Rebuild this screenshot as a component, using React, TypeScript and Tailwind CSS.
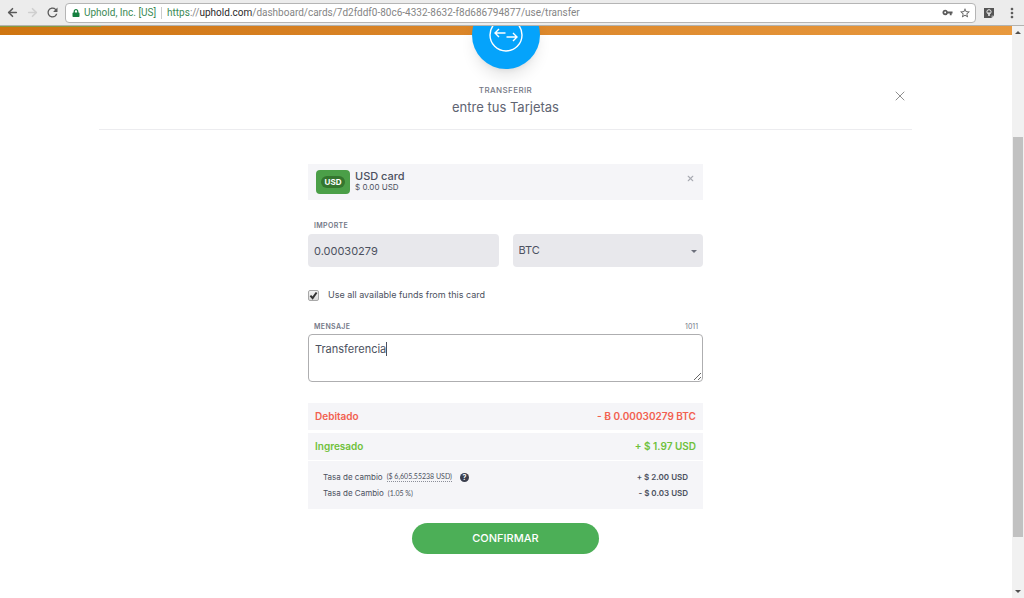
import React, { useState } from 'react';
import { ArrowLeft, ArrowRight, X } from 'lucide-react';
import { FaLock } from 'react-icons/fa';
import { MdMoreVert, MdRefresh, MdStarBorder, MdVpnKey } from 'react-icons/md';

const BrowserBar: React.FC = () => (
  <header className="relative z-10 flex h-[26px] shrink-0 items-center border-b border-[#b3b3b0] bg-[#ececec] pl-1 pr-1 text-[#5a5a5a]">
    <button type="button" aria-label="Back" className="flex w-4 justify-center">
      <ArrowLeft className="h-[13px] w-[13px]" strokeWidth={3} />
    </button>
    <button type="button" aria-label="Forward" disabled className="ml-1 flex w-4 justify-center text-[#cfcfcf]">
      <ArrowRight className="h-[13px] w-[13px]" strokeWidth={3} />
    </button>
    <button type="button" aria-label="Reload" className="ml-1 flex w-4 justify-center">
      <MdRefresh className="h-[15px] w-[15px]" />
    </button>
    <div className="ml-[5px] flex h-5 min-w-0 flex-1 items-center rounded-sm border border-[#b5b5b5] bg-white pl-1 pr-1 font-[Roboto,sans-serif] text-[10px]">
      <FaLock className="ml-0.5 h-2 w-2 shrink-0 text-[#15803f]" />
      <span className="ml-1 whitespace-nowrap text-[#3a8a55]">Uphold, Inc. [US]</span>
      <span className="mx-[5px] h-3 w-px shrink-0 bg-[#cccccc]" />
      <span className="min-w-0 flex-1 truncate text-[#858585]">
        <span className="text-[#3a8a55]">https</span>://<span className="text-[#2a2a2a]">uphold.com</span>
        /dashboard/cards/7d2fddf0-80c6-4332-8632-f8d686794877/use/transfer
      </span>
      <button type="button" aria-label="Saved password">
        <MdVpnKey className="h-[11px] w-[11px]" />
      </button>
      <button type="button" aria-label="Bookmark" className="ml-1.5">
        <MdStarBorder className="h-3 w-3" />
      </button>
    </div>
    <button type="button" aria-label="Extension" className="ml-[7px]">
      <svg viewBox="0 0 12 12" className="h-3 w-3">
        <path d="M1 1h10v7.5L8.5 11H1z" fill="#555" />
        <path d="M11 8.5H8.5V11" fill="#aaa" />
        <circle cx="6" cy="4.8" r="2.1" fill="none" stroke="#eee" />
        <path d="M6 5v4M5 8h2" stroke="#eee" />
      </svg>
    </button>
    <button type="button" aria-label="Menu" className="ml-[9px]">
      <MdMoreVert className="h-4 w-4" />
    </button>
  </header>
);

const Scrollbar: React.FC = () => (
  <div aria-hidden="true" className="flex w-3 shrink-0 flex-col items-center bg-[#f1f1f1]">
    <svg viewBox="0 0 12 12" className="h-3 w-3 shrink-0">
      <path d="M3 8l3-3 3 3z" fill="#505050" />
    </svg>
    <div className="flex w-full flex-1 flex-col px-px">
      <div className="basis-[18%]" />
      <div className="basis-[73%] bg-[#c1c1c1]" />
    </div>
    <svg viewBox="0 0 12 12" className="h-3 w-3 shrink-0">
      <path d="M3 4l3 3 3-3z" fill="#505050" />
    </svg>
  </div>
);

const TransferForm: React.FC = () => {
  const [amount, setAmount] = useState('0.00030279');
  const [currency, setCurrency] = useState('BTC');
  const [useAll, setUseAll] = useState(true);
  const [message, setMessage] = useState('Transferencia');

  return (
    <form className="mx-auto mt-[34px] w-full max-w-[395px] text-[#4c5160]" onSubmit={(e) => e.preventDefault()}>
      {/* Selected card */}
      <div className="flex h-9 items-center bg-[#f5f5f8] pl-2 pr-2">
        <div className="flex h-6 w-[34px] items-center justify-center rounded-sm bg-[#4b9f48]">
          <span className="rounded-full bg-[#34762f] px-1 text-[8px] leading-3 font-bold text-white">USD</span>
        </div>
        <div className="ml-[5px] flex-1 pb-0.5">
          <p className="text-[11px] leading-3 font-medium">USD card</p>
          <p className="text-[8px] leading-[11px]">$ 0.00 USD</p>
        </div>
        <button type="button" aria-label="Remove card" className="mb-2 text-[#a9abb3]">
          <X className="h-[9px] w-[9px]" strokeWidth={3} />
        </button>
      </div>

      {/* Amount */}
      <label htmlFor="amount" className="mt-5 block pl-1.5 text-[7px] leading-3 font-semibold tracking-wider text-[#747887]">
        IMPORTE
      </label>
      <div className="mt-0.5 grid grid-cols-2 gap-3.5">
        <input
          id="amount"
          value={amount}
          onChange={(e) => setAmount(e.target.value)}
          className="h-[33px] w-full rounded-sm bg-[#e8e8ec] px-1.5 text-[11px] outline-none"
        />
        <div className="relative">
          <select
            aria-label="Moneda"
            value={currency}
            onChange={(e) => setCurrency(e.target.value)}
            className="h-[33px] w-full appearance-none rounded-sm bg-[#e8e8ec] px-1.5 text-[11px] outline-none"
          >
            <option>BTC</option>
            <option>USD</option>
          </select>
          <svg viewBox="0 0 6 3" className="pointer-events-none absolute top-4 right-1.5 h-[3px] w-1.5">
            <path d="M0 0h6L3 3z" fill="#6d707c" />
          </svg>
        </div>
      </div>

      <div className="mt-5 flex h-4 items-center">
        <div className="relative h-[11px] w-[11px]">
          <input
            id="use-all"
            type="checkbox"
            checked={useAll}
            onChange={(e) => setUseAll(e.target.checked)}
            className="block h-[11px] w-[11px] appearance-none rounded-xs border border-[#a8a8a8] bg-linear-to-b from-[#f2f2f2] to-[#dcdcdc]"
          />
          {useAll && (
            <svg viewBox="0 0 11 11" className="pointer-events-none absolute inset-0 h-[11px] w-[11px]">
              <path d="M2.4 5.6l2.2 2.5 4-5.6" fill="none" stroke="#333" strokeWidth="2" />
            </svg>
          )}
        </div>
        <label htmlFor="use-all" className="ml-[9px] text-[9px]">
          Use all available funds from this card
        </label>
      </div>

      {/* Message */}
      <div className="mt-[18px] flex justify-between pl-1.5 pr-[5px] text-[7px] leading-3 text-[#747887]">
        <label htmlFor="message" className="font-semibold tracking-wider">
          MENSAJE
        </label>
        <span>1011</span>
      </div>
      <div className="relative mt-px">
        <textarea
          id="message"
          value={message}
          onChange={(e) => setMessage(e.target.value)}
          className="block h-12 w-full rounded-sm border border-[#aeaeb0] bg-white px-1.5 py-1.5 text-[11px] leading-4 outline-none"
        />
        <span className="absolute top-2 left-[78px] h-3.5 w-px bg-[#4c5160]" />
      </div>

      {/* Totals */}
      <div className="mt-[21px] flex h-[27px] items-center justify-between bg-[#f5f5f8] px-[7px] text-[10px] font-semibold text-[#f2604f]">
        <span>Debitado</span>
        <span>- Ƀ 0.00030279 BTC</span>
      </div>
      <div className="mt-[3px] flex h-7 items-center justify-between border-b border-white bg-[#f5f5f8] px-[7px] text-[10px] font-semibold text-[#6fc13b]">
        <span>Ingresado</span>
        <span>+ $ 1.97 USD</span>
      </div>
      <div className="bg-[#f5f5f8] px-[15px] py-2 text-[8px] leading-4">
        <div className="flex justify-between">
          <span className="flex items-center gap-1">
            Tasa de cambio
            <span className="border-b border-dotted border-[#8b8e99] font-[Lato,sans-serif] text-[7px] leading-[9px]">
              ($ 6,605.55238 USD)
            </span>
            <button
              type="button"
              aria-label="Ayuda"
              className="ml-1 flex h-[9px] w-[9px] items-center justify-center rounded-full bg-[#3b3f4e] text-[7px] leading-[9px] font-bold text-white"
            >
              ?
            </button>
          </span>
          <span className="font-semibold">+ $ 2.00 USD</span>
        </div>
        <div className="flex justify-between">
          <span className="flex items-center gap-1">
            Tasa de Cambio <span className="font-[Lato,sans-serif] text-[7px]">(1.05 %)</span>
          </span>
          <span className="font-semibold">- $ 0.03 USD</span>
        </div>
      </div>

      <button
        type="submit"
        className="mx-auto mt-3.5 block h-[31px] w-[187px] rounded-full bg-[#4caf57] text-[11px] font-medium text-white"
      >
        CONFIRMAR
      </button>
    </form>
  );
};

const App: React.FC = () => {
  return (
    <div className="flex h-screen flex-col overflow-hidden bg-white font-[Inter,sans-serif]">
      <BrowserBar />
      <div className="flex min-h-0 flex-1">
        <main className="relative min-w-0 flex-1 overflow-hidden">
          <div className="h-[9px] bg-linear-to-r from-[#cf7510] to-[#e8993e]" />
          <div className="absolute top-0 left-0 h-px w-[10%] bg-[#8a9a3c]" />
          <div className="absolute -top-[25px] left-1/2 flex h-[68px] w-[68px] -translate-x-1/2 items-center justify-center rounded-full bg-[#05a3fb] shadow-lg">
            <svg viewBox="0 0 34 34" className="h-[34px] w-[34px]" fill="none" stroke="white" strokeWidth="1.4">
              <circle cx="17" cy="17" r="16" />
              <path d="M16.5 15H6M10 11l-4 4 4 4M17.5 19H28M24 15l4 4-4 4" />
            </svg>
          </div>

          <div className="pr-[100px] pl-[99px]">
            <div className="flex h-[95px] items-end border-b border-[#ececef] pb-[13px]">
              <div className="w-6" />
              <h1 className="flex-1 text-center text-[#747885]">
                <span className="block text-[8px] leading-4 font-medium tracking-wider">TRANSFERIR</span>
                <span className="block text-[13px] leading-[18px] text-[#606472]">entre tus Tarjetas</span>
              </h1>
              <button type="button" aria-label="Cerrar" className="mb-3 flex w-6 justify-center text-[#8f8f8f]">
                <X className="h-4 w-4" strokeWidth={1.5} />
              </button>
            </div>
            <TransferForm />
          </div>
        </main>
        <Scrollbar />
      </div>
    </div>
  );
};

export default App;
